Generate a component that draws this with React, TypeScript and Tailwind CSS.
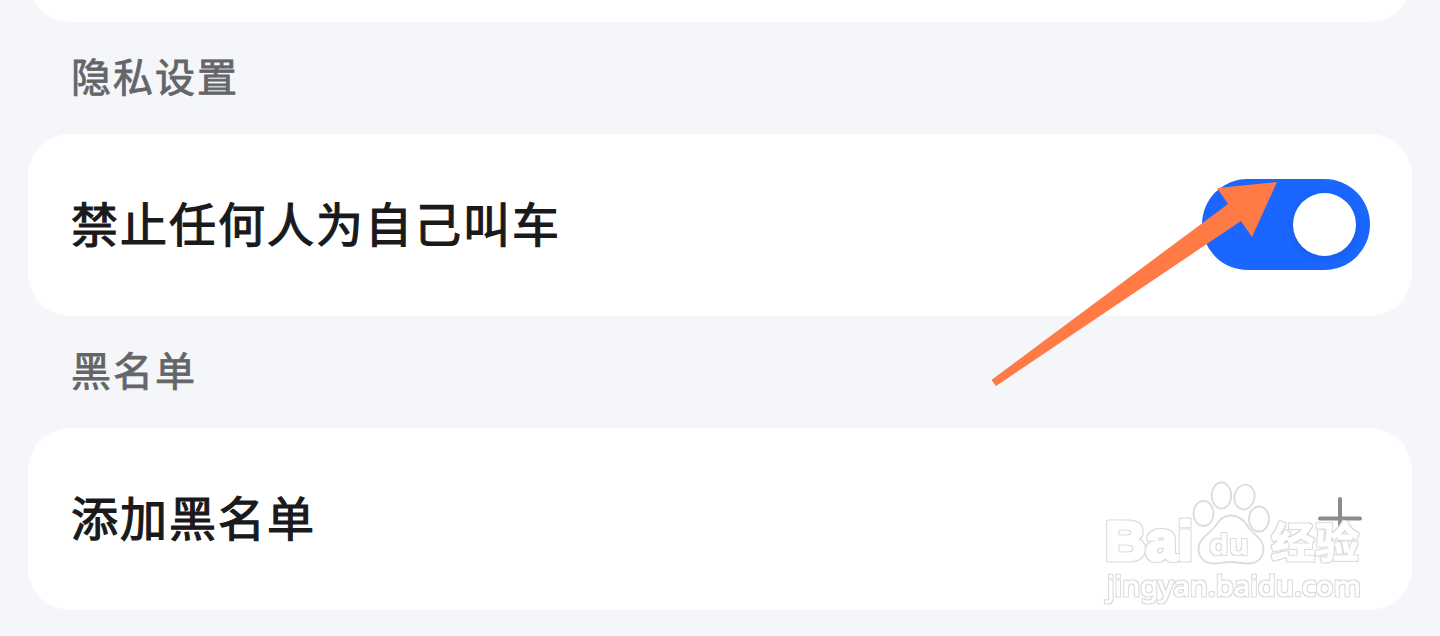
import type { ReactNode } from "react";

function SectionLabel({ children }: { children: ReactNode }) {
  return (
    <h2 className="flex h-28 items-center px-[43px] pb-[6px] text-[40px] leading-none tracking-[2px] text-[#646569] [-webkit-text-stroke:0.8px_#646569]">
      {children}
    </h2>
  );
}

function SettingCard({ title, action }: { title: string; action: ReactNode }) {
  return (
    <div className="flex h-[182px] items-center justify-between rounded-[42px] bg-white pl-[43px] pr-[42px]">
      <span className="pb-[8px] text-[47px] leading-none tracking-[2px] text-[#1a1a1c] [-webkit-text-stroke:1.2px_#1a1a1c]">
        {title}
      </span>
      {action}
    </div>
  );
}

function Toggle() {
  return (
    <button
      type="button"
      role="switch"
      aria-checked="true"
      className="mb-0.5 flex h-[91px] w-[168px] items-center justify-end rounded-full bg-[#1a66ff] pr-[14px]"
    >
      <span className="h-[63px] w-[63px] rounded-full bg-white shadow-[0_2px_8px_rgba(0,0,0,0.12)]" />
    </button>
  );
}

function AddButton() {
  return (
    <button type="button" className="mr-2">
      <svg width="44" height="44" viewBox="0 0 44 44" className="block">
        <path
          d="M22 2v40M2 21.500h40"
          stroke="#8c8c8c"
          strokeWidth="4"
          strokeLinecap="round"
        />
      </svg>
    </button>
  );
}

function Arrow() {
  return (
    <svg
      width="288"
      height="208"
      viewBox="990 180 288 208"
      className="pointer-events-none absolute left-[990px] top-[180px]"
    >
      <path
        d="M1277 182 1217 188 1228 204 991.5 380 996 386 1241 221 1252 237Z"
        fill="#ff7a45"
      />
    </svg>
  );
}

function Watermark() {
  return (
    <svg
      width="280"
      height="136"
      viewBox="1096 474 280 136"
      className="pointer-events-none absolute left-[1096px] top-[474px]"
    >
      {/* grey rim around the merged white letters */}
      <filter id="rim" x="-5%" y="-10%" width="110%" height="120%" colorInterpolationFilters="sRGB">
        <feMorphology in="SourceAlpha" operator="dilate" radius="1" result="grown" />
        <feFlood floodColor="#dadada" />
        <feComposite in2="grown" operator="in" result="edge" />
        <feMerge>
          <feMergeNode in="edge" />
          <feMergeNode in="SourceGraphic" />
        </feMerge>
      </filter>
      <g fill="#fff" stroke="#fff" strokeLinejoin="round" filter="url(#rim)">
        <text
          x="1105"
          y="560"
          textLength="88"
          lengthAdjust="spacingAndGlyphs"
          strokeWidth="3"
          className="font-['Liberation_Sans',sans-serif] text-[55px] font-bold"
        >
          Bai
        </text>
        <text
          x="1271"
          y="558"
          textLength="88"
          lengthAdjust="spacingAndGlyphs"
          strokeWidth="1"
          className="font-['Noto_Sans_CJK_SC',sans-serif] text-[42px] font-bold"
        >
          经验
        </text>
        <text
          x="1107"
          y="596"
          textLength="254"
          lengthAdjust="spacingAndGlyphs"
          strokeWidth="0.8"
          className="font-['Noto_Sans',sans-serif] text-[28px]"
        >
          jingyan.baidu.com
        </text>
      </g>
      <g fill="#fff" stroke="#dcdcdc" strokeWidth="1.8">
        <ellipse cx="1203.5" cy="513.5" rx="10" ry="12.5" />
        <ellipse cx="1221.5" cy="495.5" rx="9.7" ry="13" />
        <ellipse cx="1244.5" cy="497" rx="10" ry="12.5" transform="rotate(12 1244.5 497)" />
        <ellipse cx="1259" cy="519" rx="10" ry="12.5" />
        <path d="M1231 515.5c-8 0-12 5-16 11-5 7-17 12-16.500 23 .5 9 7 14 15 14 6 0 10-1.500 17-1.500s11 1.500 18 1.500c9 0 15-6 15-15 0-10-10-14-15-21-4-7-9-12-17.500-12Z" />
      </g>
      <text
        x="1209"
        y="555"
        textLength="40"
        lengthAdjust="spacingAndGlyphs"
        fill="#fff"
        filter="url(#rim)"
        className="font-['Noto_Sans',sans-serif] text-[29px] font-bold"
      >
        du
      </text>
    </svg>
  );
}

export default function App() {
  return (
    <main className="relative h-[636px] w-full overflow-hidden bg-[#f4f6fa] px-7 font-['Noto_Sans_CJK_SC',sans-serif]">
      <div className="flex h-[22px] flex-col justify-end overflow-hidden">
        <div className="h-[182px] shrink-0 rounded-[42px] bg-white" />
      </div>

      <SectionLabel>隐私设置</SectionLabel>
      <SettingCard title="禁止任何人为自己叫车" action={<Toggle />} />

      <SectionLabel>黑名单</SectionLabel>
      <SettingCard title="添加黑名单" action={<AddButton />} />

      <Watermark />
      <Arrow />
    </main>
  );
}
